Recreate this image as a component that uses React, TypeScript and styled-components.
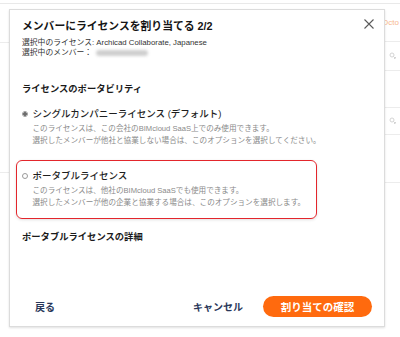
import styled, { createGlobalStyle } from "styled-components";

const GlobalStyle = createGlobalStyle`
  html, body {
    margin: 0;
    padding: 0;
    background: #ffffff;
  }
  body {
    font-family: "Liberation Sans", "Noto Sans CJK JP", sans-serif;
  }
`;

const Page = styled.div`
  position: relative;
  width: 400px;
  height: 337px;
  overflow: hidden;
  background: #fff;
`;

const TopStrip = styled.div`
  height: 3px;
  border-bottom: 1px solid #e9e9e9;
`;

const Table = styled.div`
  display: flex;
  justify-content: space-between;
`;

const Column = styled.div<{ $width: number }>`
  width: ${(p) => p.$width}px;
  display: flex;
  flex-direction: column;
`;

const Row = styled.div<{ $h: number; $end?: boolean }>`
  height: ${(p) => p.$h}px;
  border-bottom: 1px solid #ececec;
  display: flex;
  align-items: center;
  justify-content: ${(p) => (p.$end ? "flex-end" : "flex-start")};
  padding: 0 1px 0 4px;
  box-sizing: border-box;
  font-size: 8px;
`;

const FadedLink = styled.span`
  color: #f7b88f;
  white-space: nowrap;
`;

const Modal = styled.div`
  position: absolute;
  left: 9px;
  top: 9px;
  width: 376px;
  height: 318px;
  box-sizing: border-box;
  background: #fff;
  border: 1px solid #dcdcdc;
  box-shadow: 0 1px 2px rgba(0, 0, 0, 0.12);
  display: flex;
  flex-direction: column;
  padding: 8px 10px 9px 12px;
  color: #1d1d1d;
`;

const Header = styled.div`
  display: flex;
  justify-content: space-between;
  align-items: flex-start;
`;

const Title = styled.h1`
  margin: 0;
  font-size: 10.8px;
  line-height: 16px;
  font-weight: 700;
  color: #151515;
`;

const CloseButton = styled.button`
  border: 0;
  background: none;
  padding: 0;
  margin-top: 1px;
  width: 10px;
  height: 10px;
  display: flex;
  cursor: pointer;
`;

const Meta = styled.div`
  margin-top: 4px;
  font-size: 7.8px;
  line-height: 10px;
  color: #333;
`;

const Blurred = styled.span`
  display: inline-block;
  width: 52px;
  height: 6px;
  margin-left: 4px;
  vertical-align: middle;
  background: #cfcfcf;
  border-radius: 3px;
  filter: blur(1.5px);
`;

const SectionTitle = styled.h2<{ $top: number }>`
  margin: ${(p) => p.$top}px 0 0;
  font-size: 9.3px;
  line-height: 14px;
  font-weight: 700;
  color: #1a1a1a;
`;

const Options = styled.div`
  display: flex;
  flex-direction: column;
  gap: 2.5px;
  margin: 2.5px 0 0 -6px;
  width: 301px;
`;

const Option = styled.label<{ $highlight?: boolean }>`
  display: block;
  border: 1.5px solid ${(p) => (p.$highlight ? "#e3262c" : "transparent")};
  border-radius: 6px;
  box-shadow: ${(p) => (p.$highlight ? "0 1px 3px rgba(0,0,0,0.12)" : "none")};
  padding: 8px 6px 9px 4.5px;
  cursor: pointer;
`;

const OptionHead = styled.div`
  display: flex;
  align-items: center;
  gap: 5px;
`;

const Radio = styled.span<{ $checked?: boolean }>`
  width: 6px;
  height: 6px;
  box-sizing: border-box;
  border-radius: 50%;
  border: 1px solid #9a9a9a;
  background: ${(p) => (p.$checked ? "radial-gradient(circle, #6d6d6d 0 1.6px, #fff 2px)" : "#fff")};
  flex: none;
`;

const OptionLabel = styled.span`
  font-size: 9.5px;
  line-height: 14px;
  font-weight: 500;
  color: #1f1f1f;
`;

const OptionDesc = styled.div`
  margin: 2px 0 0 11px;
  font-size: 7.6px;
  line-height: 12px;
  color: #8a8a8a;
  white-space: nowrap;
`;

const Footer = styled.div`
  margin-top: auto;
  display: flex;
  align-items: center;
  padding-right: 2px;
`;

const TextButton = styled.button`
  border: 0;
  background: none;
  font-family: inherit;
  font-size: 10px;
  font-weight: 700;
  color: #29375a;
  padding: 0 13px;
  cursor: pointer;
`;

const Spacer = styled.div`
  flex: 1;
`;

const PrimaryButton = styled.button`
  margin-left: 7px;
  width: 109px;
  height: 21px;
  border: 0;
  border-radius: 11px;
  background: #ff6a0e;
  color: #fff;
  font-family: inherit;
  font-size: 10.5px;
  font-weight: 700;
  cursor: pointer;
`;

const SmallIcon = () => (
  <svg width="8" height="8" viewBox="0 0 8 8" fill="none" stroke="#cfcfcf" strokeWidth="0.9">
    <circle cx="3" cy="3" r="2" />
    <path d="M4.5 4.5 L6.5 6.5 M5 7 L7 5" />
  </svg>
);

export default function App() {
  return (
    <Page>
      <GlobalStyle />
      <TopStrip />
      <Table>
        <Column $width={20}>
          <Row $h={39} />
          <Row $h={130} />
        </Column>
        <Column $width={15}>
          <Row $h={38} $end>
            <FadedLink>Octo</FadedLink>
          </Row>
          <Row $h={29}>
            <SmallIcon />
          </Row>
          <Row $h={37} />
          <Row $h={27}>
            <SmallIcon />
          </Row>
          <Row $h={48} />
        </Column>
      </Table>

      <Modal>
        <Header>
          <Title>メンバーにライセンスを割り当てる 2/2</Title>
          <CloseButton aria-label="閉じる">
            <svg width="10" height="10" viewBox="0 0 10 10" stroke="#5a5a5a" strokeWidth="1.1">
              <path d="M0.5 0.5 L9.5 9.5 M9.5 0.5 L0.5 9.5" />
            </svg>
          </CloseButton>
        </Header>
        <Meta>
          <div>選択中のライセンス: Archicad Collaborate, Japanese</div>
          <div>
            選択中のメンバー：
            <Blurred />
          </div>
        </Meta>

        <SectionTitle $top={23.5}>ライセンスのポータビリティ</SectionTitle>
        <Options>
          <Option>
            <OptionHead>
              <Radio $checked />
              <OptionLabel>シングルカンパニーライセンス (デフォルト)</OptionLabel>
            </OptionHead>
            <OptionDesc>
              <div>このライセンスは、この会社のBIMcloud SaaS上でのみ使用できます。</div>
              <div>選択したメンバーが他社と協業しない場合は、このオプションを選択してください。</div>
            </OptionDesc>
          </Option>
          <Option $highlight>
            <OptionHead>
              <Radio />
              <OptionLabel>ポータブルライセンス</OptionLabel>
            </OptionHead>
            <OptionDesc>
              <div>このライセンスは、他社のBIMcloud SaaSでも使用できます。</div>
              <div>選択したメンバーが他の企業と協業する場合は、このオプションを選択します。</div>
            </OptionDesc>
          </Option>
        </Options>

        <SectionTitle $top={11}>ポータブルライセンスの詳細</SectionTitle>

        <Footer>
          <TextButton>戻る</TextButton>
          <Spacer />
          <TextButton>キャンセル</TextButton>
          <PrimaryButton>割り当ての確認</PrimaryButton>
        </Footer>
      </Modal>
    </Page>
  );
}
